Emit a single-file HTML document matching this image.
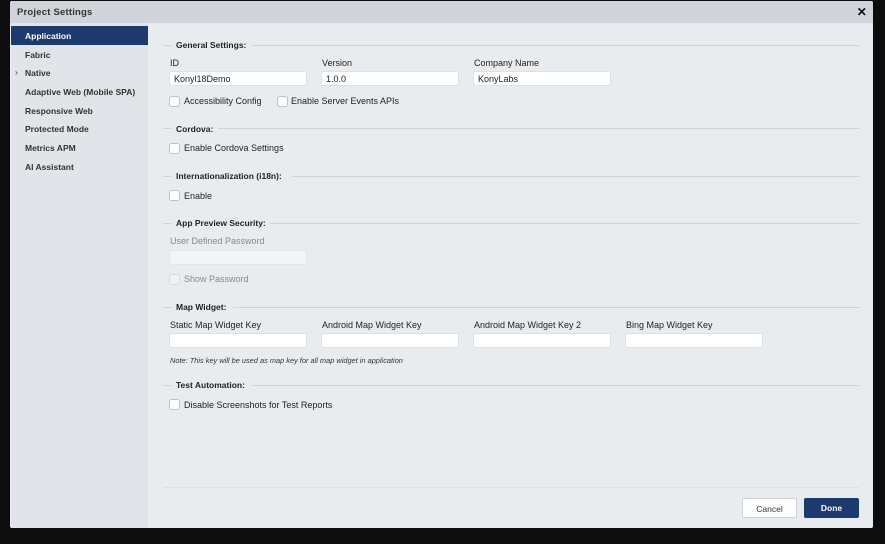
<!DOCTYPE html>
<html><head><style>
*{box-sizing:border-box;margin:0;padding:0}
body{width:885px;height:544px;background:#0d0d0d;position:relative;overflow:hidden;font-family:"Liberation Sans",sans-serif;font-size:9px;color:#222}
.dlg{position:absolute;left:10px;top:1px;width:863px;height:527px;background:#e9ecef;border-radius:2px;overflow:hidden}
.tb{position:absolute;left:0;top:0;right:0;height:22px;background:#d0d4da;font-size:9.5px;color:#333;padding:6px 7px;font-weight:bold;letter-spacing:.2px}
.x{position:absolute;right:6px;top:4px;font-size:12px;font-weight:bold;color:#111}
.sb{position:absolute;left:1px;top:22px;width:137px;bottom:0;background:#e1e4e9}
.sb div{height:18.7px;padding:5px 0 0 14px;font-weight:bold;font-size:8.5px;color:#333}
.sb .act{background:#1c3a6e;color:#fff;margin-top:3px}
.t{position:absolute;white-space:nowrap}
.h{font-weight:bold;font-size:8.5px;color:#222}
.line{position:absolute;height:1px;background:#cfd3d8}
.in{position:absolute;height:15px;background:#fff;border:1px solid #dde0e4;border-radius:2px;padding:2px 4px;font-size:9px}
.cb{position:absolute;width:11px;height:11px;background:#fff;border:1px solid #bfc3c8;border-radius:3px}
.btn{position:absolute;height:20px;font-size:8.5px;text-align:center;padding-top:5px;border-radius:2px}
</style></head><body>
<div class="dlg">
<div class="tb">Project Settings<span class="x">✕</span></div>
<div class="sb">
<div class="act">Application</div>
<div>Fabric</div>
<div style="position:relative"><span style="position:absolute;left:4px;top:4px;font-weight:normal">›</span>Native</div>
<div>Adaptive Web (Mobile SPA)</div>
<div>Responsive Web</div>
<div>Protected Mode</div>
<div>Metrics APM</div>
<div>AI Assistant</div>
</div>
</div>
<div class="line" style="left:163px;top:45px;width:8px"></div><span class="t h" style="left:176px;top:40px">General Settings:</span><div class="line" style="left:252px;top:45px;width:607px"></div>
<span class="t" style="left:170px;top:58px">ID</span>
<span class="t" style="left:322px;top:58px">Version</span>
<span class="t" style="left:474px;top:58px">Company Name</span>
<div class="in" style="left:169px;top:71px;width:138px">Konyl18Demo</div>
<div class="in" style="left:321px;top:71px;width:138px">1.0.0</div>
<div class="in" style="left:473px;top:71px;width:138px">KonyLabs</div>
<div class="cb" style="left:169px;top:96px"></div><span class="t" style="left:184px;top:96px">Accessibility Config</span>
<div class="cb" style="left:277px;top:96px"></div><span class="t" style="left:291px;top:96px">Enable Server Events APIs</span>

<div class="line" style="left:163px;top:128px;width:8px"></div><span class="t h" style="left:176px;top:124px">Cordova:</span><div class="line" style="left:218px;top:128px;width:641px"></div>
<div class="cb" style="left:169px;top:143px"></div><span class="t" style="left:184px;top:143px">Enable Cordova Settings</span>

<div class="line" style="left:163px;top:176px;width:8px"></div><span class="t h" style="left:176px;top:171px">Internationalization (i18n):</span><div class="line" style="left:292px;top:176px;width:567px"></div>
<div class="cb" style="left:169px;top:190px"></div><span class="t" style="left:184px;top:191px">Enable</span>

<div class="line" style="left:163px;top:223px;width:8px"></div><span class="t h" style="left:176px;top:218px">App Preview Security:</span><div class="line" style="left:270px;top:223px;width:589px"></div>
<span class="t" style="left:170px;top:236px;color:#888">User Defined Password</span>
<div class="in" style="left:169px;top:250px;width:138px;background:#f3f4f6;border-color:#e3e5e8"></div>
<div class="cb" style="left:169px;top:274px;background:#f1f2f4;border-color:#d6d9dc"></div><span class="t" style="left:184px;top:274px;color:#888">Show Password</span>

<div class="line" style="left:163px;top:307px;width:8px"></div><span class="t h" style="left:176px;top:302px">Map Widget:</span><div class="line" style="left:233px;top:307px;width:626px"></div>
<span class="t" style="left:170px;top:320px">Static Map Widget Key</span>
<span class="t" style="left:322px;top:320px">Android Map Widget Key</span>
<span class="t" style="left:474px;top:320px">Android Map Widget Key 2</span>
<span class="t" style="left:626px;top:320px">Bing Map Widget Key</span>
<div class="in" style="left:169px;top:333px;width:138px"></div>
<div class="in" style="left:321px;top:333px;width:138px"></div>
<div class="in" style="left:473px;top:333px;width:138px"></div>
<div class="in" style="left:625px;top:333px;width:138px"></div>
<span class="t" style="left:170px;top:356px;font-style:italic;font-size:7.4px;color:#333">Note: This key will be used as map key for all map widget in application</span>

<div class="line" style="left:163px;top:385px;width:8px"></div><span class="t h" style="left:176px;top:380px">Test Automation:</span><div class="line" style="left:252px;top:385px;width:607px"></div>
<div class="cb" style="left:169px;top:399px"></div><span class="t" style="left:184px;top:400px">Disable Screenshots for Test Reports</span>

<div class="line" style="left:163px;top:487px;width:696px;background:#dde0e4"></div>
<div class="btn" style="left:742px;top:498px;width:55px;background:#fff;border:1px solid #cfd3d8;color:#333">Cancel</div>
<div class="btn" style="left:804px;top:498px;width:55px;background:#1c3a6e;color:#fff;font-weight:bold">Done</div>
</body></html>
